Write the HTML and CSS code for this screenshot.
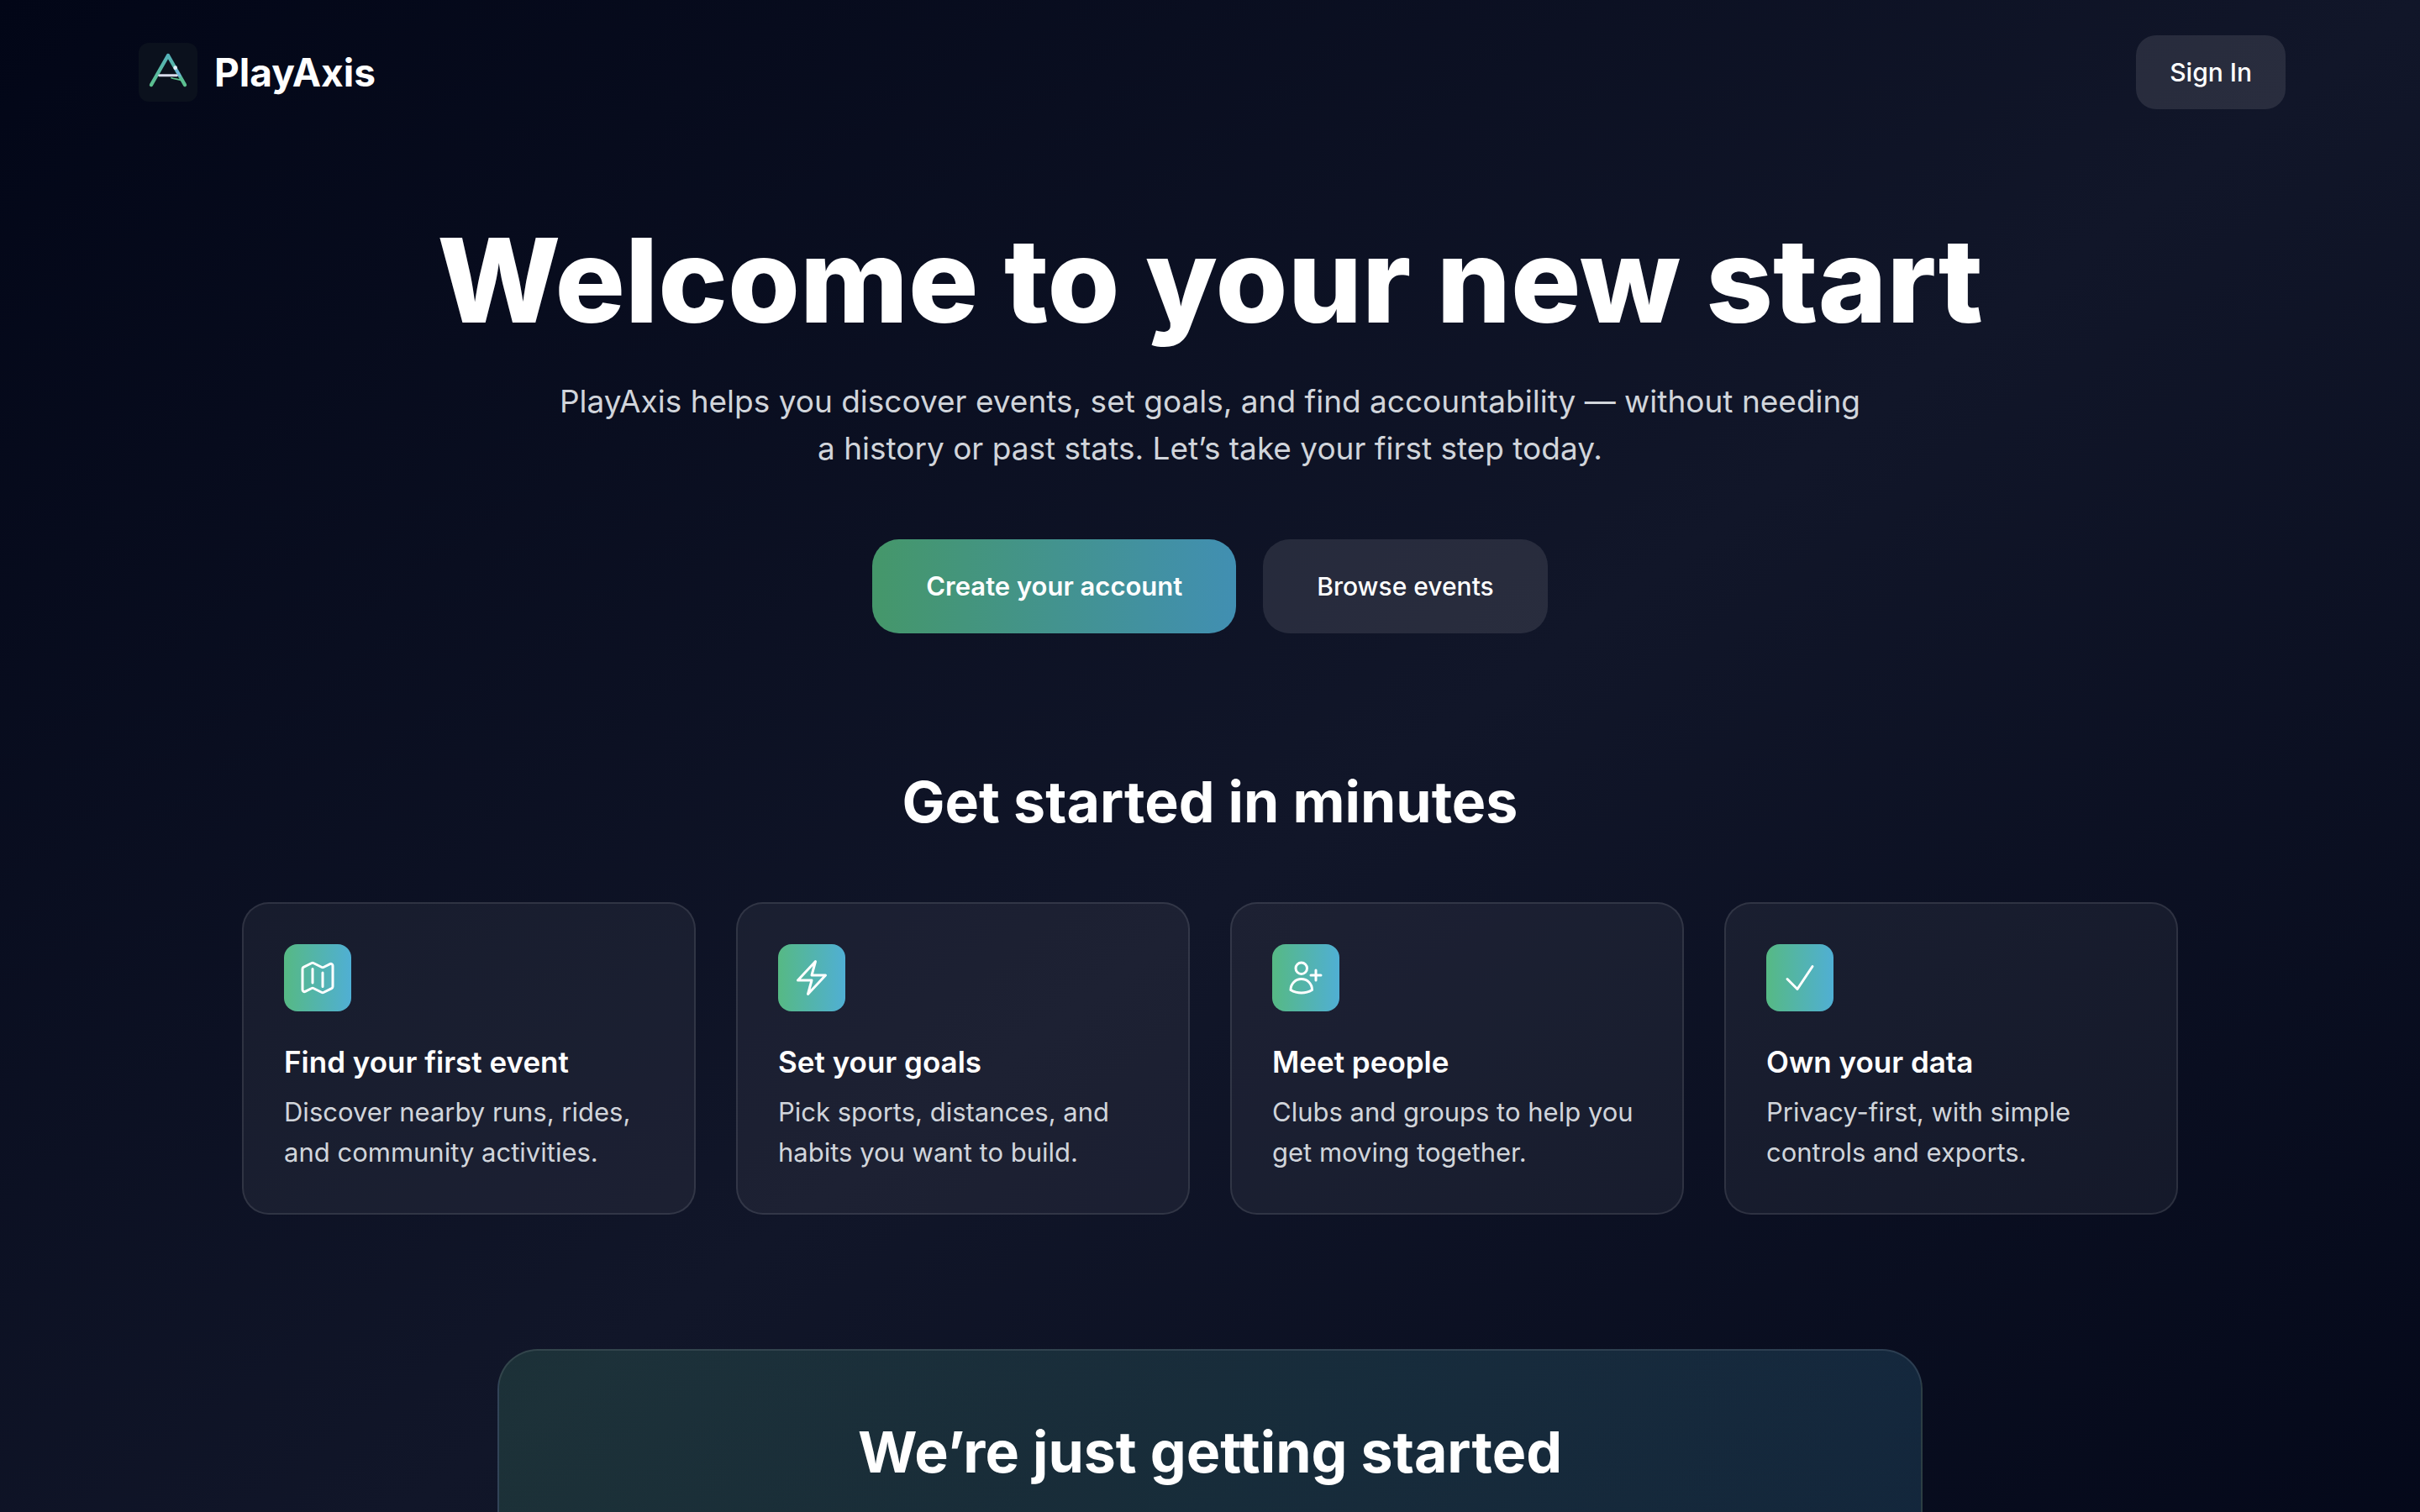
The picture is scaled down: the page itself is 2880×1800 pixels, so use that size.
FILE: index.html
```html
<!DOCTYPE html>
<html lang="en">
<head>
  <meta charset="utf-8">
  <meta name="viewport" content="width=device-width, initial-scale=1">
  <title>PlayAxis</title>
  <link rel="stylesheet" href="styles.css">
</head>
<body>
  <header class="header">
    <a class="brand" href="#">
      <svg class="brand-mark" viewBox="0 0 210 210" aria-hidden="true">
        <defs>
          <linearGradient id="mark" gradientUnits="userSpaceOnUse" x1="0" y1="40" x2="0" y2="155">
            <stop offset="0" stop-color="#55b1bb"/>
            <stop offset="1" stop-color="#5cc08c"/>
          </linearGradient>
        </defs>
        <g fill="none" stroke-linecap="round" stroke-linejoin="round">
          <path d="M45 150 105 45l60 105" stroke="url(#mark)" stroke-width="13"/>
          <path d="M74 116h62" stroke="#d9dcec" stroke-width="9"/>
          <path d="M132 93l15 24" stroke="#6fb2dc" stroke-width="9"/>
          <path d="M117 125c14 5 26 4 42 11" stroke="#5cc08c" stroke-width="5"/>
        </g>
        <circle cx="131" cy="89" r="7" fill="#e4f1fb"/>
      </svg>
      <span>PlayAxis</span>
    </a>
    <a class="btn btn-small btn-muted" href="#">Sign In</a>
  </header>

  <main>
    <section class="hero">
      <h1>Welcome to your new start</h1>
      <p>PlayAxis helps you discover events, set goals, and find accountability — without needing a history or past stats. Let’s take your first step today.</p>
      <div class="actions">
        <a class="btn btn-primary" href="#">Create your account</a>
        <a class="btn btn-muted" href="#">Browse events</a>
      </div>
    </section>

    <section class="features">
      <h2>Get started in minutes</h2>
      <div class="grid">
        <article class="card">
          <div class="card-icon">
            <svg viewBox="0 0 24 24" aria-hidden="true"><path d="M9 6.75V15m6-6v8.25m.503 3.498 4.875-2.437c.381-.19.622-.58.622-1.006V4.82c0-.836-.88-1.38-1.628-1.006l-3.869 1.934c-.317.159-.69.159-1.006 0L9.503 3.252a1.125 1.125 0 0 0-1.006 0L3.622 5.689C3.24 5.88 3 6.27 3 6.695V19.18c0 .836.88 1.38 1.628 1.006l3.869-1.934c.317-.159.69-.159 1.006 0l4.994 2.497c.317.158.69.158 1.006 0Z"/></svg>
          </div>
          <h3>Find your first event</h3>
          <p>Discover nearby runs, rides, and community activities.</p>
        </article>
        <article class="card">
          <div class="card-icon">
            <svg viewBox="0 0 24 24" aria-hidden="true"><path d="m3.75 13.5 10.5-11.25L12 10.5h8.25L9.75 21.75 12 13.5H3.75Z"/></svg>
          </div>
          <h3>Set your goals</h3>
          <p>Pick sports, distances, and habits you want to build.</p>
        </article>
        <article class="card">
          <div class="card-icon">
            <svg viewBox="0 0 24 24" aria-hidden="true"><path d="M18 7.5v3m0 0v3m0-3h3m-3 0h-3m-2.25-4.125a3.375 3.375 0 1 1-6.75 0 3.375 3.375 0 0 1 6.75 0ZM3 19.235v-.11a6.375 6.375 0 0 1 12.75 0v.109A12.318 12.318 0 0 1 9.374 21c-2.331 0-4.512-.645-6.374-1.766Z"/></svg>
          </div>
          <h3>Meet people</h3>
          <p>Clubs and groups to help you get moving together.</p>
        </article>
        <article class="card">
          <div class="card-icon">
            <svg viewBox="0 0 24 24" aria-hidden="true"><path d="m4.5 12.75 6 6 9-13.5"/></svg>
          </div>
          <h3>Own your data</h3>
          <p>Privacy-first, with simple controls and exports.</p>
        </article>
      </div>
    </section>

    <section class="cta">
      <h2>We’re just getting started</h2>
    </section>
  </main>
</body>
</html>
```
FILE: styles.css
```css
*,
*::before,
*::after {
  box-sizing: border-box;
}

html {
  background: #020617 linear-gradient(to bottom right, #020617, #111629, #020617);
}

body {
  min-height: 120vh;
  margin: 0;
  color: #fff;
  font-family: Inter, "Liberation Sans", sans-serif;
  font-size: 31px;
  line-height: 48px;
}

h1,
h2,
h3,
p {
  margin: 0;
}

a {
  color: inherit;
  text-decoration: none;
}

.header {
  display: flex;
  align-items: center;
  justify-content: space-between;
  max-width: 2640px;
  margin: 0 auto;
  padding: 42px 40px;
}

.brand {
  display: flex;
  align-items: center;
  gap: 20px;
  padding-left: 5px;
  font-size: 46px;
  font-weight: 700;
}

.brand-mark {
  width: 70px;
  height: 70px;
  border-radius: 12px;
  background: #0b111d;
}

.btn {
  display: inline-flex;
  align-items: center;
  padding: 32px 64px;
  border-radius: 32px;
}

.btn-small {
  padding: 20px 40px;
  border-radius: 24px;
}

.btn-muted {
  background: rgba(255, 255, 255, 0.1);
  font-size: 30px;
  font-weight: 500;
}

.btn-primary {
  background: linear-gradient(to right, #45976a, #418fb2);
  font-weight: 600;
}

.hero {
  display: flex;
  flex-direction: column;
  align-items: center;
  padding: 90px 40px 0;
  text-align: center;
}

.hero h1 {
  font-size: 139px;
  font-weight: 800;
  line-height: 144px;
}

.hero p {
  max-width: 1560px;
  margin-top: 44px;
  color: #d1d5db;
  font-size: 37px;
  line-height: 56px;
}

.actions {
  display: flex;
  gap: 32px;
  margin-top: 80px;
}

h2 {
  font-size: 68px;
  font-weight: 700;
  line-height: 80px;
  text-align: center;
}

.features {
  max-width: 2384px;
  margin: 0 auto;
  padding: 160px 40px;
}

.grid {
  display: grid;
  grid-template-columns: repeat(4, 1fr);
  gap: 48px;
  margin-top: 80px;
}

.card {
  padding: 48px;
  border: 2px solid rgba(255, 255, 255, 0.1);
  border-radius: 32px;
  background: rgba(255, 255, 255, 0.05);
}

.card-icon {
  display: grid;
  place-items: center;
  width: 80px;
  height: 80px;
  border-radius: 16px;
  background: linear-gradient(to right, #56b984, #50afd4);
}

.card-icon svg {
  width: 48px;
  height: 48px;
  fill: none;
  stroke: #fff;
  stroke-width: 1.5;
  stroke-linecap: round;
  stroke-linejoin: round;
}

.card h3 {
  margin: 32px 0 8px;
  font-size: 35px;
  font-weight: 600;
  line-height: 56px;
}

.card p {
  color: #d1d5db;
}

.cta {
  max-width: 1696px;
  margin: 0 auto;
  padding: 80px;
  border: 2px solid rgba(255, 255, 255, 0.1);
  border-radius: 48px;
  background: linear-gradient(to right, rgba(86, 185, 132, 0.17), rgba(80, 175, 212, 0.17));
}
```
